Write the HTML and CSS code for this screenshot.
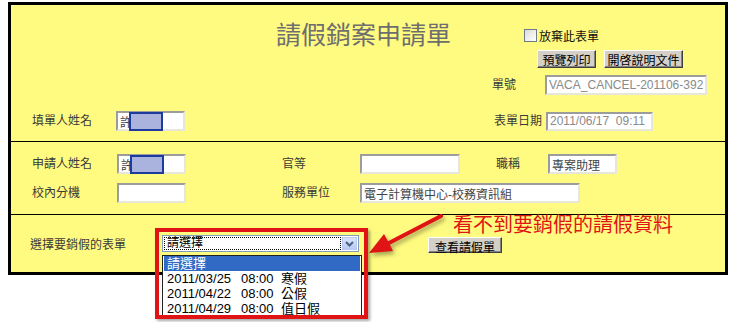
FILE: index.html
```html
<!DOCTYPE html>
<html lang="zh-Hant">
<head>
    <meta charset="UTF-8">
    <title>請假銷案申請單</title>
    <link rel="stylesheet" href="styles.css">
</head>
<body>
    <div class="page">
    <div class="form">
        <!-- 表頭 -->
        <div class="head">
            <div class="top">
                <h1 class="title">請假銷案申請單</h1>
                <div class="tools">
                    <label class="check-row"><span class="checkbox"></span>放棄此表單</label>
                    <div class="btn-row">
                        <button type="button" class="btn btn-print">預覽列印</button>
                        <button type="button" class="btn btn-doc">開啓說明文件</button>
                    </div>
                </div>
            </div>
            <div class="row row-no">
                <span class="lbl lbl-no">單號</span>
                <input class="field f-no dim" value="VACA_CANCEL-201106-392" readonly>
            </div>
            <div class="row row-fill">
                <span class="lbl lbl-first">填單人姓名</span>
                <span class="ime">
                    <input class="field f-name" value="許" readonly>
                    <span class="ime-mark"></span>
                </span>
                <span class="lbl lbl-date">表單日期</span>
                <input class="field f-date dim" value="2011/06/17  09:11" readonly>
            </div>
        </div>

        <!-- 申請人 -->
        <div class="sec2">
            <span class="lbl">申請人姓名</span>
            <span class="ime">
                <input class="field f-name" value="許" readonly>
                <span class="ime-mark"></span>
            </span>
            <span class="lbl c4">官等</span>
            <input class="field f-rank">
            <span class="lbl c7">職稱</span>
            <input class="field f-title" value="專案助理" readonly>

            <span class="lbl">校內分機</span>
            <input class="field f-ext">
            <span class="lbl c4">服務單位</span>
            <input class="field f-unit" value="電子計算機中心-校務資訊組" readonly>
        </div>

        <!-- 選擇表單 -->
        <div class="sec3">
            <span class="lbl lbl-pick">選擇要銷假的表單</span>
            <div class="combo-wrap">
                <div class="combo">
                    <span class="combo-text">請選擇</span>
                    <span class="combo-btn">
                        <svg width="9" height="6" viewBox="0 0 9 6"><polyline points="1,1 4.5,4.5 8,1" fill="none" stroke="#4d6185" stroke-width="2"/></svg>
                    </span>
                </div>
                <div class="dropdown">
                    <div class="opt sel">請選擇</div>
                    <div class="opt"><span>2011/03/25</span><span>08:00</span><span class="cjk">寒假</span></div>
                    <div class="opt"><span>2011/04/22</span><span>08:00</span><span class="cjk">公假</span></div>
                    <div class="opt"><span>2011/04/29</span><span>08:00</span><span class="cjk">值日假</span></div>
                </div>
                <div class="redbox"></div>
            </div>
            <button type="button" class="btn btn-view">查看請假單</button>
        </div>

        <p class="note">看不到要銷假的請假資料</p>
        <svg class="arrow" width="82" height="50" viewBox="0 0 82 50">
            <line x1="76" y1="6" x2="22" y2="34" stroke="#e01414" stroke-width="4" stroke-linecap="round"/>
            <polygon points="4,43 19,24 24,33 28,41" fill="#e01414"/>
        </svg>
    </div>
    </div>
</body>
</html>
```

FILE: styles.css
```css
html, body {
    margin: 0;
    background: #fff;
}
.page {
    height: 322px;
    padding: 2px 0 0 8px;
    box-sizing: border-box;
}
.form {
    position: relative;
    width: 714px;
    border: 3px solid #000;
    background: #fffb80;
    font: 12px "Liberation Sans", "Noto Sans CJK TC", sans-serif;
    color: #3a3a3a;
}
.lbl {
    white-space: nowrap;
    line-height: 14px;
}
.field {
    box-sizing: border-box;
    height: 20px;
    margin: 0;
    padding: 0 2px;
    border: 2px solid;
    border-color: #9c9c9c #e6e6da #e6e6da #9c9c9c;
    background: #fff;
    font: 12px "Liberation Sans", "Noto Sans CJK TC", sans-serif;
    color: #444;
    outline: none;
}
.field.dim {
    color: #8a8a8a;
}
.btn {
    box-sizing: border-box;
    height: 18px;
    padding: 0;
    background: #d4d0c8;
    border: 1px solid;
    border-color: #fff #404040 #404040 #fff;
    box-shadow: inset -1px -1px #808080;
    font: 12px "Liberation Sans", "Noto Sans CJK TC", sans-serif;
    color: #000;
}

/* header */
.head {
    box-sizing: border-box;
    height: 136px;
    padding-left: 21px;
}
.top {
    display: flex;
    height: 70px;
}
.title {
    width: 248px;
    margin: 16px 0 0 244px;
    font-size: 25px;
    line-height: 28px;
    font-weight: normal;
    color: #6e6e6e;
}
.tools {
    padding-top: 23px;
}
.check-row {
    display: flex;
    align-items: center;
    height: 14px;
    color: #111;
}
.checkbox {
    box-sizing: border-box;
    width: 13px;
    height: 13px;
    margin-right: 2px;
    border: 1px solid #6f7b88;
    background: linear-gradient(135deg, #dcdcd6, #fff);
}
.btn-row {
    display: flex;
    gap: 8px;
    margin: 8px 0 0 13px;
}
.btn-print {
    width: 59px;
}
.btn-doc {
    width: 79px;
}
.row {
    display: flex;
    align-items: center;
}
.row-no {
    height: 20px;
    margin-left: 460px;
}
.lbl-no {
    width: 53px;
}
.f-no {
    width: 162px;
}
.row-fill {
    height: 20px;
    margin-top: 16px;
}
.lbl-first {
    width: 84px;
}
.lbl-date {
    width: 52px;
    margin-left: 309px;
}
.f-date {
    width: 107px;
    height: 19px;
}

/* IME highlight over the name box */
.ime {
    position: relative;
    display: inline-block;
    height: 20px;
}
.f-name {
    width: 69px;
}
.ime-mark {
    position: absolute;
    left: 13px;
    top: 1px;
    box-sizing: border-box;
    width: 34px;
    height: 19px;
    border: 2px solid #1d3b9e;
    background: #a9b3dd;
}

/* applicant */
.sec2 {
    box-sizing: border-box;
    height: 73px;
    border-top: 1px solid #000;
    padding: 12px 0 0 21px;
    display: grid;
    grid-template-columns: 85px 69px 96px 78px 100px 36px 52px 69px;
    grid-template-rows: 20px 20px;
    row-gap: 9px;
    align-items: center;
}
.sec2 .c4 {
    grid-column: 4;
}
.sec2 .c7 {
    grid-column: 7;
}
.f-rank {
    width: 100px;
}
.f-title {
    width: 69px;
}
.f-ext {
    width: 69px;
}
.f-unit {
    grid-column: 5 / span 4;
    width: 220px;
}

/* pick a form */
.sec3 {
    box-sizing: border-box;
    height: 58px;
    border-top: 1px solid #000;
    padding-left: 19px;
    display: flex;
    align-items: flex-start;
}
.lbl-pick {
    width: 132px;
    margin-top: 23px;
}
.combo-wrap {
    position: relative;
    z-index: 2;
    margin-top: 20px;
}
.combo {
    box-sizing: border-box;
    display: flex;
    width: 197px;
    height: 17px;
    padding: 1px;
    border: 1px solid #7f9db9;
    background: #fff;
}
.combo-text {
    flex: 1;
    box-sizing: border-box;
    height: 13px;
    margin-right: 1px;
    padding-left: 2px;
    border: 1px dotted #000;
    line-height: 11px;
    color: #000;
    font-size: 12px;
}
.combo-btn {
    box-sizing: border-box;
    display: flex;
    align-items: center;
    justify-content: center;
    width: 15px;
    height: 13px;
    border: 1px solid #b9c9ef;
    background: linear-gradient(#d9e4fc, #b7c9f5);
}
.dropdown {
    position: absolute;
    left: 0;
    top: 20px;
    box-sizing: border-box;
    width: 200px;
    padding: 0 1px;
    border: 1px solid #202020;
    background: #fff;
    color: #000;
    font-size: 13px;
}
.opt {
    display: grid;
    grid-template-columns: 74px 40px auto;
    height: 15px;
    padding-left: 3px;
    line-height: 15px;
}
.opt.sel {
    display: block;
    background: #316ac5;
    color: #fff;
}
.redbox {
    position: absolute;
    left: -7px;
    top: -7px;
    box-sizing: border-box;
    width: 213px;
    height: 91px;
    border: 4px solid #e01414;
    box-shadow: 2px 2px 3px rgba(0, 0, 0, 0.35);
}
.btn-view {
    width: 74px;
    height: 16px;
    margin: 22px 0 0 69px;
}

/* annotation */
.note {
    position: absolute;
    left: 442px;
    top: 208px;
    margin: 0;
    font: 20px "Noto Sans CJK TC", sans-serif;
    line-height: 22px;
    color: #e01414;
}
.arrow {
    position: absolute;
    left: 354px;
    top: 205px;
    filter: drop-shadow(2px 3px 2px rgba(0, 0, 0, 0.35));
}
```
